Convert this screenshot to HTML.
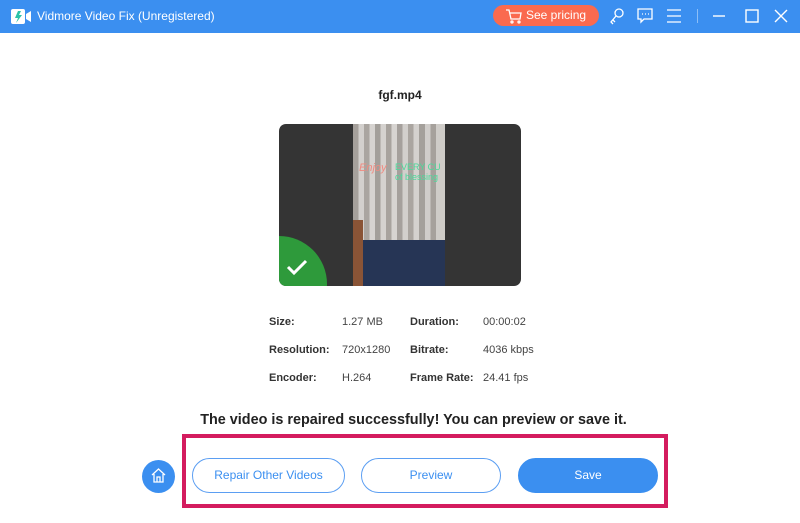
<!DOCTYPE html>
<html><head><style>
*{margin:0;padding:0;box-sizing:border-box}
body{width:800px;height:523px;background:#fff;font-family:"Liberation Sans",Arial,sans-serif;position:relative;overflow:hidden}
.bar{position:absolute;left:0;top:0;width:800px;height:33px;background:#3b8ff0}
.t{position:absolute;color:#fff;font-size:12px;top:9px;left:37px}
.abs{position:absolute}
.lbl{position:absolute;font-size:11px;font-weight:bold;color:#333}
.val{position:absolute;font-size:11px;color:#444}
.btn{position:absolute;top:458px;height:35px;border-radius:18px;border:1px solid #5b9ef2;color:#3b8ff0;font-size:12px;text-align:center;line-height:33px;background:#fff}
</style></head><body>
<div class="bar">
<svg class="abs" style="left:10px;top:8px" width="22" height="18"><rect x="1" y="1" width="14" height="15" rx="2" fill="#fff"/><path d="M8 3 L5 10 L8 10 L6 15 L12 7 L9 7 L11 3Z" fill="#2bc3a8"/><path d="M16 6 L21 3 L21 14 L16 11Z" fill="#fff"/></svg>
<div class="t">Vidmore Video Fix (Unregistered)</div>
<div class="abs" style="left:493px;top:5px;width:106px;height:21px;border-radius:11px;background:#fa6a4f;color:#fff;font-size:12px;line-height:21px;padding-left:33px">See pricing</div>
<svg class="abs" style="left:505px;top:8px" width="18" height="16" fill="none" stroke="#fff" stroke-width="1.3"><path d="M1 2 L4 2 L6 11 L15 11 L16 5 L5 5"/><circle cx="7" cy="14" r="1"/><circle cx="14" cy="14" r="1"/></svg>
<svg class="abs" style="left:608px;top:7px" width="18" height="18" fill="none" stroke="#fff" stroke-width="1.3"><circle cx="11" cy="6" r="4"/><path d="M8 9 L3 15 L5 17 M5 13 L7 15"/></svg>
<svg class="abs" style="left:636px;top:7px" width="18" height="18" fill="none" stroke="#fff" stroke-width="1.3"><path d="M2 2 H16 V12 H8 L5 15 V12 H2Z"/><path d="M6 7h1M9 7h1M12 7h1"/></svg>
<svg class="abs" style="left:666px;top:8px" width="16" height="16" stroke="#fff" stroke-width="1.3"><path d="M1 2H15M1 8H15M1 14H15"/></svg>
<div class="abs" style="left:697px;top:9px;width:1px;height:14px;background:#8cbef7"></div>
<svg class="abs" style="left:712px;top:8px" width="80" height="16" fill="none" stroke="#fff" stroke-width="1.4"><path d="M1 8H13"/><rect x="34" y="2" width="12" height="12"/><path d="M63 2L75 14M75 2L63 14"/></svg>
</div>
<div class="abs" style="left:0;top:88px;width:800px;text-align:center;font-size:12px;font-weight:bold;color:#222">fgf.mp4</div>
<div class="abs" style="left:279px;top:124px;width:242px;height:162px;border-radius:7px;background:#343434;overflow:hidden">
<div class="abs" style="left:74px;top:0;width:92px;height:162px;background:linear-gradient(90deg,#a5a09b 0 6%,#d3d0cd 6% 12%,#aaa5a0 12% 18%,#d6d3d0 18% 24%,#a39f9a 24% 30%,#d5d2cf 30% 36%,#a8a39e 36% 42%,#d7d4d1 42% 48%,#a5a09c 48% 54%,#d2cfcc 54% 60%,#aaa5a0 60% 66%,#d4d1ce 66% 72%,#a4a09b 72% 78%,#d0cdca 78% 84%,#a6a19c 84% 90%,#cfccc8 90%)"></div>
<div class="abs" style="left:80px;top:38px;font-size:11px;color:#f08a80;font-style:italic">Enjoy</div>
<div class="abs" style="left:116px;top:38px;font-size:9px;color:#4bd99a;line-height:10px">EVERY CU<br>of blessing</div>
<div class="abs" style="left:74px;top:96px;width:10px;height:66px;background:#8a5436"></div>
<div class="abs" style="left:84px;top:116px;width:82px;height:46px;background:#263555"></div>
<div class="abs" style="left:-48px;top:112px;width:96px;height:96px;border-radius:50%;background:#2e9a3b"></div>
<svg class="abs" style="left:7px;top:134px" width="22" height="18" fill="none" stroke="#fff" stroke-width="3"><path d="M2 9 L8 15 L20 3"/></svg>
</div>
<div class="lbl" style="left:269px;top:316px">Size:</div><div class="val" style="left:342px;top:316px">1.27 MB</div>
<div class="lbl" style="left:410px;top:316px">Duration:</div><div class="val" style="left:483px;top:316px">00:00:02</div>
<div class="lbl" style="left:269px;top:344px">Resolution:</div><div class="val" style="left:342px;top:344px">720x1280</div>
<div class="lbl" style="left:410px;top:344px">Bitrate:</div><div class="val" style="left:483px;top:344px">4036 kbps</div>
<div class="lbl" style="left:269px;top:372px">Encoder:</div><div class="val" style="left:342px;top:372px">H.264</div>
<div class="lbl" style="left:410px;top:372px">Frame Rate:</div><div class="val" style="left:483px;top:372px">24.41 fps</div>
<div class="abs" style="left:0;top:412px;width:800px;text-align:center;font-size:14.4px;font-weight:bold;color:#222;padding-left:27px">The video is repaired successfully! You can preview or save it.</div>
<div class="abs" style="left:142px;top:460px;width:33px;height:33px;border-radius:50%;background:#3b8ff0"></div>
<svg class="abs" style="left:150px;top:467px" width="17" height="17" fill="none" stroke="#fff" stroke-width="1.3"><path d="M2 8 L8.5 2 L15 8 M4 7 V15 H13 V7 M7 15 V10 H10 V15"/></svg>
<div class="abs" style="left:182px;top:434px;width:486px;height:74px;border:4px solid #d41c5f"></div>
<div class="btn" style="left:192px;width:153px">Repair Other Videos</div>
<div class="btn" style="left:361px;width:140px">Preview</div>
<div class="btn" style="left:518px;width:140px;background:#3b8ff0;color:#fff;border-color:#3b8ff0">Save</div>
</body></html>
